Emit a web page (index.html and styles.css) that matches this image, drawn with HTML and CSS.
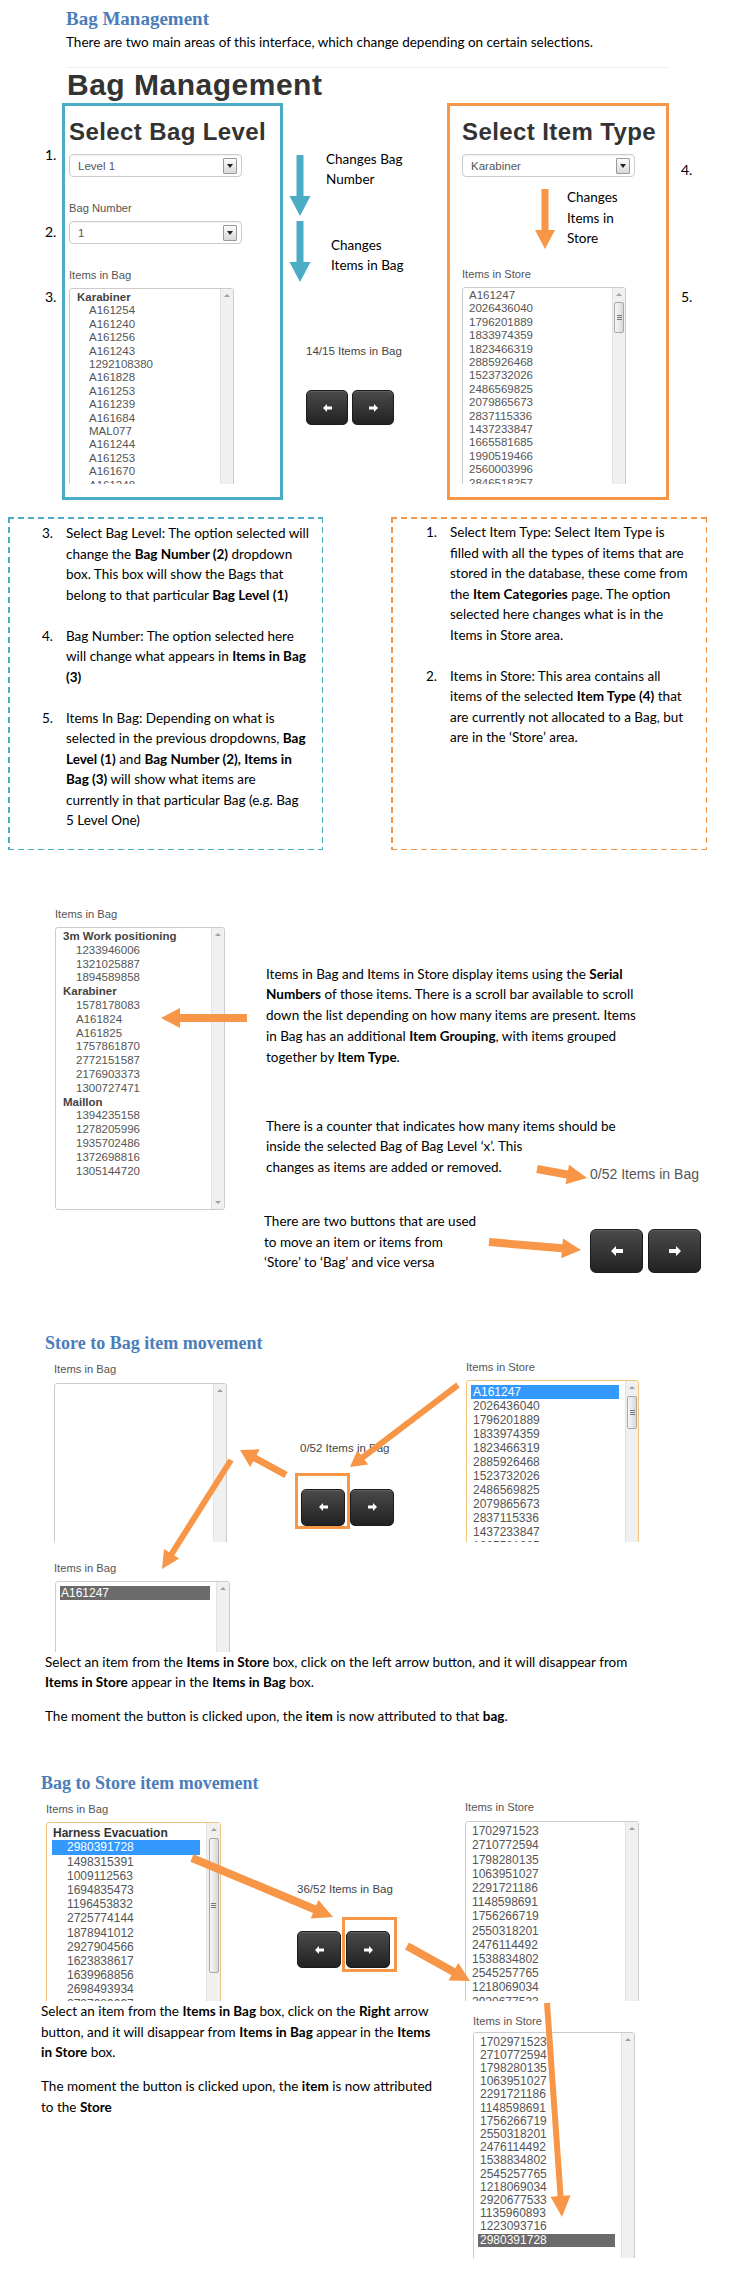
FILE: index.html
```html
<!DOCTYPE html>
<html>
<head>
<meta charset="utf-8">
<link rel="stylesheet" href="styles.css">
</head>
<body>
<div class="page">

<section class="intro">
  <h1 class="doc-h h-top">Bag Management</h1>
  <p class="lead">There are two main areas of this interface, which change depending on certain selections.</p>
  <hr class="rule">
  <h2 class="app-title">Bag Management</h2>
  <div class="app-row">
    <div class="nums nums-left"><span class="n1">1.</span><span class="n2">2.</span><span class="n3">3.</span></div>
    <div class="panel panel-blue">
      <h3 class="panel-title">Select Bag Level</h3>
      <div class="select"><span>Level 1</span><i class="caret-box"></i></div>
      <div class="lbl lbl-a">Bag Number</div>
      <div class="select sel-2"><span>1</span><i class="caret-box"></i></div>
      <div class="lbl lbl-a">Items in Bag</div>
      <div class="clip clip-a">
        <div class="listbox lb-a-bag">
          <div class="opts">
            <div class="grp">Karabiner</div>
            <div class="opt">A161254</div><div class="opt">A161240</div><div class="opt">A161256</div><div class="opt">A161243</div>
            <div class="opt">1292108380</div><div class="opt">A161828</div><div class="opt">A161253</div><div class="opt">A161239</div>
            <div class="opt">A161684</div><div class="opt">MAL077</div><div class="opt">A161244</div><div class="opt">A161253</div>
            <div class="opt">A161670</div><div class="opt">A161248</div><div class="opt">A161249</div>
          </div>
          <div class="sb"><i class="up"></i></div>
        </div>
      </div>
    </div>
    <div class="mid">
      <div class="changes c1">Changes Bag<br>Number</div>
      <div class="changes c2">Changes<br>Items in Bag</div>
      <div class="counter cnt-a">14/15 Items in Bag</div>
      <div class="btns btns-a">
        <div class="btn"><svg width="9" height="8" viewBox="0 0 9 8"><polygon points="0,4 4,0 4,2.5 9,2.5 9,5.5 4,5.5 4,8" fill="#fff"/></svg></div>
        <div class="btn"><svg width="9" height="8" viewBox="0 0 9 8"><polygon points="9,4 5,0 5,2.5 0,2.5 0,5.5 5,5.5 5,8" fill="#fff"/></svg></div>
      </div>
    </div>
    <div class="panel panel-orange">
      <h3 class="panel-title">Select Item Type</h3>
      <div class="select"><span>Karabiner</span><i class="caret-box"></i></div>
      <div class="changes c3">Changes<br>Items in<br>Store</div>
      <div class="lbl lbl-store">Items in Store</div>
      <div class="clip clip-a2">
        <div class="listbox lb-a-store">
          <div class="opts">
            <div class="opt">A161247</div><div class="opt">2026436040</div><div class="opt">1796201889</div><div class="opt">1833974359</div>
            <div class="opt">1823466319</div><div class="opt">2885926468</div><div class="opt">1523732026</div><div class="opt">2486569825</div>
            <div class="opt">2079865673</div><div class="opt">2837115336</div><div class="opt">1437233847</div><div class="opt">1665581685</div>
            <div class="opt">1990519466</div><div class="opt">2560003996</div><div class="opt">2846518257</div><div class="opt">1211840563</div>
          </div>
          <div class="sb"><i class="up"></i><div class="thumb th-a"></div></div>
        </div>
      </div>
    </div>
    <div class="nums nums-right"><span class="n4">4.</span><span class="n5">5.</span></div>
  </div>
</section>

<section class="notes">
  <div class="note note-blue">
    <div class="item"><span class="num">3.</span><p>Select Bag Level: The option selected will<br>change the <b>Bag Number (2)</b> dropdown<br>box. This box will show the Bags that<br>belong to that particular <b>Bag Level (1)</b></p></div>
    <div class="item"><span class="num">4.</span><p>Bag Number: The option selected here<br>will change what appears in <b>Items in Bag</b><br><b>(3)</b></p></div>
    <div class="item"><span class="num">5.</span><p>Items In Bag: Depending on what is<br>selected in the previous dropdowns, <b>Bag</b><br><b>Level (1)</b> and <b>Bag Number (2), Items in</b><br><b>Bag (3)</b> will show what items are<br>currently in that particular Bag (e.g. Bag<br>5 Level One)</p></div>
  </div>
  <div class="note note-orange">
    <div class="item"><span class="num">1.</span><p>Select Item Type: Select Item Type is<br>filled with all the types of items that are<br>stored in the database, these come from<br>the <b>Item Categories</b> page. The option<br>selected here changes what is in the<br>Items in Store area.</p></div>
    <div class="item"><span class="num">2.</span><p>Items in Store: This area contains all<br>items of the selected <b>Item Type (4)</b> that<br>are currently not allocated to a Bag, but<br>are in the ‘Store’ area.</p></div>
  </div>
</section>

<section class="explain">
  <div class="col-list">
    <div class="lbl">Items in Bag</div>
    <div class="listbox lb-c">
      <div class="opts">
        <div class="grp">3m Work positioning</div>
        <div class="opt">1233946006</div><div class="opt">1321025887</div><div class="opt">1894589858</div>
        <div class="grp">Karabiner</div>
        <div class="opt">1578178083</div><div class="opt">A161824</div><div class="opt">A161825</div><div class="opt">1757861870</div>
        <div class="opt">2772151587</div><div class="opt">2176903373</div><div class="opt">1300727471</div>
        <div class="grp">Maillon</div>
        <div class="opt">1394235158</div><div class="opt">1278205996</div><div class="opt">1935702486</div><div class="opt">1372698816</div><div class="opt">1305144720</div>
      </div>
      <div class="sb"><i class="up"></i><i class="down"></i></div>
    </div>
  </div>
  <div class="col-text">
    <p class="para p1">Items in Bag and Items in Store display items using the <b>Serial</b><br><b>Numbers</b> of those items. There is a scroll bar available to scroll<br>down the list depending on how many items are present. Items<br>in Bag has an additional <b>Item Grouping</b>, with items grouped<br>together by <b>Item Type</b>.</p>
    <div class="row2">
      <p class="para p2">There is a counter that indicates how many items should be<br>inside the selected Bag of Bag Level ‘x’. This<br>changes as items are added or removed.</p>
      <div class="counter cnt-big">0/52 Items in Bag</div>
    </div>
    <div class="row3">
      <p class="para p3">There are two buttons that are used<br>to move an item or items from<br>‘Store’ to ‘Bag’ and vice versa</p>
      <div class="btns btns-big">
        <div class="btn"><svg width="12" height="10" viewBox="0 0 12 10"><polygon points="0,5 5,0 5,3 12,3 12,7 5,7 5,10" fill="#fff"/></svg></div>
        <div class="btn"><svg width="12" height="10" viewBox="0 0 12 10"><polygon points="12,5 7,0 7,3 0,3 0,7 7,7 7,10" fill="#fff"/></svg></div>
      </div>
    </div>
  </div>
</section>

<section class="move move-d">
  <h2 class="doc-h h-d">Store to Bag item movement</h2>
  <div class="move-row">
    <div class="mcol mcol-dl">
      <div class="lbl">Items in Bag</div>
      <div class="clip clip-dl">
        <div class="listbox lb-d-left">
          <div class="opts"></div>
          <div class="sb"><i class="up"></i></div>
        </div>
      </div>
    </div>
    <div class="mmid mmid-d">
      <div class="counter cnt-d">0/52 Items in Bag</div>
      <div class="btns btns-m">
        <div class="btn"><svg width="9" height="8" viewBox="0 0 9 8"><polygon points="0,4 4,0 4,2.5 9,2.5 9,5.5 4,5.5 4,8" fill="#fff"/></svg></div>
        <div class="btn"><svg width="9" height="8" viewBox="0 0 9 8"><polygon points="9,4 5,0 5,2.5 0,2.5 0,5.5 5,5.5 5,8" fill="#fff"/></svg></div>
      </div>
    </div>
    <div class="mcol mcol-dr">
      <div class="lbl">Items in Store</div>
      <div class="clip clip-dr">
        <div class="listbox lb-d-store focus">
          <div class="opts">
            <div class="opt sel">A161247</div><div class="opt">2026436040</div><div class="opt">1796201889</div><div class="opt">1833974359</div>
            <div class="opt">1823466319</div><div class="opt">2885926468</div><div class="opt">1523732026</div><div class="opt">2486569825</div>
            <div class="opt">2079865673</div><div class="opt">2837115336</div><div class="opt">1437233847</div><div class="opt">1665581685</div>
          </div>
          <div class="sb"><i class="up"></i><div class="thumb th-d"></div></div>
        </div>
      </div>
    </div>
  </div>
  <div class="after-d">
    <div class="lbl">Items in Bag</div>
    <div class="clip clip-db">
      <div class="listbox lb-d-bot">
        <div class="opts"><div class="opt sel grey">A161247</div></div>
        <div class="sb"><i class="up"></i></div>
      </div>
    </div>
  </div>
  <p class="para pd1">Select an item from the <b>Items in Store</b> box, click on the left arrow button, and it will disappear from<br><b>Items in Store</b> appear in the <b>Items in Bag</b> box.</p>
  <p class="para pd2">The moment the button is clicked upon, the <b>item</b> is now attributed to that <b>bag</b>.</p>
</section>

<section class="move move-e">
  <h2 class="doc-h h-e">Bag to Store item movement</h2>
  <div class="move-row">
    <div class="mcol mcol-el">
      <div class="lbl">Items in Bag</div>
      <div class="clip clip-el">
        <div class="listbox lb-e-bag focus">
          <div class="opts">
            <div class="grp">Harness Evacuation</div>
            <div class="opt sel">2980391728</div><div class="opt">1498315391</div><div class="opt">1009112563</div><div class="opt">1694835473</div>
            <div class="opt">1196453832</div><div class="opt">2725774144</div><div class="opt">1878941012</div><div class="opt">2927904566</div>
            <div class="opt">1623838617</div><div class="opt">1639968856</div><div class="opt">2698493934</div><div class="opt">2727089097</div>
          </div>
          <div class="sb"><i class="up"></i><div class="thumb th-e"></div></div>
        </div>
      </div>
    </div>
    <div class="mmid mmid-e">
      <div class="counter cnt-e">36/52 Items in Bag</div>
      <div class="btns btns-m">
        <div class="btn"><svg width="9" height="8" viewBox="0 0 9 8"><polygon points="0,4 4,0 4,2.5 9,2.5 9,5.5 4,5.5 4,8" fill="#fff"/></svg></div>
        <div class="btn"><svg width="9" height="8" viewBox="0 0 9 8"><polygon points="9,4 5,0 5,2.5 0,2.5 0,5.5 5,5.5 5,8" fill="#fff"/></svg></div>
      </div>
    </div>
    <div class="mcol mcol-er">
      <div class="lbl">Items in Store</div>
      <div class="clip clip-er">
        <div class="listbox lb-e-store">
          <div class="opts">
            <div class="opt">1702971523</div><div class="opt">2710772594</div><div class="opt">1798280135</div><div class="opt">1063951027</div>
            <div class="opt">2291721186</div><div class="opt">1148598691</div><div class="opt">1756266719</div><div class="opt">2550318201</div>
            <div class="opt">2476114492</div><div class="opt">1538834802</div><div class="opt">2545257765</div><div class="opt">1218069034</div>
            <div class="opt">2920677533</div>
          </div>
          <div class="sb"><i class="up"></i></div>
        </div>
      </div>
    </div>
  </div>
  <div class="after-e">
    <div class="etext">
      <p class="para pe1">Select an item from the <b>Items in Bag</b> box, click on the <b>Right</b> arrow<br>button, and it will disappear from <b>Items in Bag</b> appear in the <b>Items</b><br><b>in Store</b> box.</p>
      <p class="para pe2">The moment the button is clicked upon, the <b>item</b> is now attributed<br>to the <b>Store</b></p>
    </div>
    <div class="ecol">
      <div class="lbl">Items in Store</div>
      <div class="clip clip-e2">
        <div class="listbox lb-e-store2">
          <div class="opts">
            <div class="opt">1702971523</div><div class="opt">2710772594</div><div class="opt">1798280135</div><div class="opt">1063951027</div>
            <div class="opt">2291721186</div><div class="opt">1148598691</div><div class="opt">1756266719</div><div class="opt">2550318201</div>
            <div class="opt">2476114492</div><div class="opt">1538834802</div><div class="opt">2545257765</div><div class="opt">1218069034</div>
            <div class="opt">2920677533</div><div class="opt">1135960893</div><div class="opt">1223093716</div><div class="opt sel grey">2980391728</div>
          </div>
          <div class="sb"><i class="up"></i></div>
        </div>
      </div>
    </div>
  </div>
</section>

<svg class="overlay" width="736" height="2296" viewBox="0 0 736 2296">
  <g fill="#4bacc6">
    <polygon points="296.5,155 296.5,196 289.5,196 300,216 310.5,196 303.5,196 303.5,155"/>
    <polygon points="296.5,221 296.5,262 289.5,262 300,282 310.5,262 303.5,262 303.5,221"/>
  </g>
  <g fill="#f79646">
    <polygon points="541.5,189 541.5,230 535,230 545,249 555,230 548.5,230 548.5,189"/>
    <polygon points="247,1014 180,1014 180,1008 161,1018 180,1028 180,1022 247,1022"/>
    <polygon points="537.7,1165.1 568.0,1170.6 569.1,1164.7 587,1178 565.5,1184.3 566.6,1178.4 536.3,1172.9"/>
    <polygon points="489.35,1238.02 562.45,1244.37 562.97,1238.39 581,1250 561.23,1258.31 561.75,1252.33 488.65,1245.98"/>
    <polygon points="456.19,1382.61 360.93,1454.93 357.3,1450.15 350,1467 368.18,1464.49 364.55,1459.71 459.81,1387.39"/>
    <polygon points="287.67,1471.92 256.61,1455.04 259.72,1449.33 240,1450 250.16,1466.91 253.27,1461.2 284.33,1478.08"/>
    <polygon points="228.46,1458.4 169.1,1552.19 164.03,1548.98 162,1569 179.23,1558.6 174.17,1555.39 233.54,1461.6"/>
    <polygon points="193.54,1854.31 316.09,1905.59 318.41,1900.06 333,1917 310.69,1918.51 313.01,1912.97 190.46,1861.69"/>
    <polygon points="408.94,1942.5 455.33,1968.27 458.25,1963.03 470,1981 448.53,1980.51 451.45,1975.27 405.06,1949.5"/>
    <polygon points="549.99,2002.79 563.52,2195.84 570.51,2195.35 562,2217 550.55,2196.75 557.54,2196.26 544.01,2003.21"/>
  </g>
  <g fill="none" stroke="#f79646" stroke-width="3">
    <rect x="296.5" y="1474.5" width="52" height="53"/>
    <rect x="343.5" y="1918.5" width="52" height="52"/>
  </g>
</svg>

</div>
</body>
</html>
```

FILE: styles.css
```css
* { box-sizing: border-box; }
html, body { margin: 0; padding: 0; background: #fff; }
.page {
  position: relative;
  width: 736px;
  height: 2296px;
  overflow: hidden;
  font-family: Lato, "Open Sans", sans-serif;
  color: #000;
}
.overlay { position: absolute; left: 0; top: 0; pointer-events: none; }
p { margin: 0; }
b { font-weight: bold; }

/* document headings */
.doc-h {
  margin: 0;
  font-family: "Liberation Serif", "Times New Roman", serif;
  font-weight: bold;
  color: #4a7dba;
  font-size: 18px;
  line-height: 22px;
}
.h-top { padding-top: 8px; margin-left: 66px; font-size: 19px; }
.lead { margin: 3px 0 0 66px; font-size: 13.5px; line-height: 18px; }
.rule { margin: 16px 0 0 67px; width: 601px; height: 0; border: 0; border-top: 1px solid #efefef; }
.app-title {
  margin: 0 0 0 67px;
  font: bold 30px/34px "Liberation Sans", Arial, sans-serif;
  letter-spacing: 0.5px;
  color: #333;
}

/* app mock */
.app-row { display: flex; margin-top: 1px; height: 397px; }
.nums { font-size: 14px; line-height: 18px; }
.nums span { display: block; }
.nums-left { width: 62px; padding-left: 45px; }
.n1 { margin-top: 43px; }
.n2 { margin-top: 59px; }
.n3 { margin-top: 47px; }
.nums-right { padding-left: 12px; }
.n4 { margin-top: 58px; }
.n5 { margin-top: 109px; }

.panel { height: 397px; }
.panel-blue { width: 221px; border: 3px solid #4bacc6; padding: 12px 0 0 4px; }
.panel-orange { width: 222px; border: 3px solid #f79646; padding: 12px 0 0 12px; }
.panel-title {
  margin: 0;
  font: bold 24px/28px "Liberation Sans", Arial, sans-serif;
  letter-spacing: 0.4px;
  color: #333;
}
.select {
  display: flex;
  align-items: center;
  justify-content: space-between;
  margin-top: 8px;
  width: 173px;
  height: 23px;
  border: 1px solid #ccc;
  border-radius: 4px;
  padding: 0 4px 0 8px;
  font: 11.5px "Liberation Sans", Arial, sans-serif;
  color: #555;
  box-shadow: inset 0 1px 1px rgba(0,0,0,0.06);
}
.sel-2 { margin-top: 5px; }
.caret-box {
  width: 14px;
  height: 16px;
  border: 1px solid #9a9a9a;
  border-radius: 1px;
  background: linear-gradient(#fbfbfb, #d9d9d9);
  display: flex;
  align-items: center;
  justify-content: center;
}
.caret-box::after {
  content: "";
  border-left: 3px solid transparent;
  border-right: 3px solid transparent;
  border-top: 4px solid #222;
}
.lbl {
  font: 11.2px/15px "Liberation Sans", Arial, sans-serif;
  color: #555;
}
.lbl-a { margin-top: 24px; }
.lbl-store { margin-top: 18px; }
.clip { overflow: hidden; }
.clip-a { margin-top: 5px; height: 196px; }
.clip-a2 { margin-top: 5.5px; height: 197px; }

.mid { width: 164px; }
.changes { font-size: 13.5px; line-height: 20px; }
.c1 { margin: 46px 0 0 43px; }
.c2 { margin: 46px 0 0 48px; }
.c3 { margin: 10px 0 0 105px; line-height: 20.5px; }
.counter { font: 11.5px/14px "Liberation Sans", Arial, sans-serif; color: #444; white-space: nowrap; }
.cnt-a { margin: 69px 0 0 23px; }
.btns { display: flex; }
.btns-a { margin: 32px 0 0 23px; gap: 4px; }
.btn {
  display: flex;
  align-items: center;
  justify-content: center;
  width: 42px;
  height: 35px;
  border-radius: 5px;
  background: linear-gradient(#4a4a4a, #222);
  border: 1px solid #1c1c1c;
  box-shadow: inset 0 1px 0 rgba(255,255,255,0.12);
}

/* listboxes */
.listbox {
  display: flex;
  border: 1px solid #ccc;
  border-radius: 3px;
  background: #fff;
  font: 11.5px "Liberation Sans", Arial, sans-serif;
  color: #555;
  overflow: hidden;
}
.listbox.focus { border-color: #f1c47f; }
.opts { flex: 1; min-width: 0; }
.opt, .grp { white-space: nowrap; }
.grp { font-weight: bold; color: #444; }
.opt.sel { background: #3399ff; color: #fff; }
.opt.sel.grey { background: #6b6b6b; color: #fff; }
.sb {
  flex: none;
  width: 13px;
  background: #f0f0f0;
  border-left: 1px solid #e2e2e2;
  display: flex;
  flex-direction: column;
  align-items: center;
}
.sb .up {
  margin-top: 5px;
  width: 0; height: 0;
  border-left: 3px solid transparent;
  border-right: 3px solid transparent;
  border-bottom: 3px solid #a0a0a0;
}
.sb .down {
  margin-top: auto;
  margin-bottom: 5px;
  width: 0; height: 0;
  border-left: 3px solid transparent;
  border-right: 3px solid transparent;
  border-top: 3px solid #a0a0a0;
}
.thumb {
  width: 10px;
  border: 1px solid #a8a8a8;
  border-radius: 2px;
  background: linear-gradient(90deg, #f7f7f7, #d8d8d8);
  display: flex;
  align-items: center;
  justify-content: center;
}
.thumb::after {
  content: "";
  width: 5px;
  height: 5px;
  background: repeating-linear-gradient(#777 0 1px, transparent 1px 2px);
}

.lb-a-bag { width: 165px; height: 260px; }
.lb-a-bag .opts { padding-top: 2px; line-height: 13.4px; }
.lb-a-bag .grp { padding-left: 7px; }
.lb-a-bag .opt { padding-left: 19px; }
.lb-a-store { width: 164px; height: 260px; }
.lb-a-store .opts { padding-top: 1px; line-height: 13.4px; }
.lb-a-store .opt { padding-left: 6px; }
.th-a { margin-top: 6px; height: 31px; }

/* explain section */
.notes { display: flex; margin-top: 17px; height: 333px; }
.note {
  height: 333px;
  font-size: 13.5px;
  line-height: 20.5px;
}
.note-blue {
  width: 315px;
  margin-left: 8px;
  padding: 6px 0 0 34px;
  background:
    linear-gradient(90deg, #4bacc6 60%, transparent 60%) top left / 10px 1.5px repeat-x,
    linear-gradient(90deg, #4bacc6 60%, transparent 60%) bottom left / 10px 1.5px repeat-x,
    linear-gradient(#4bacc6 60%, transparent 60%) top left / 1.5px 10px repeat-y,
    linear-gradient(#4bacc6 60%, transparent 60%) top right / 1.5px 10px repeat-y;
}
.note-orange {
  width: 316px;
  margin-left: 68px;
  padding: 5px 0 0 35px;
  background:
    linear-gradient(90deg, #f79646 60%, transparent 60%) top left / 10px 1.5px repeat-x,
    linear-gradient(90deg, #f79646 60%, transparent 60%) bottom left / 10px 1.5px repeat-x,
    linear-gradient(#f79646 60%, transparent 60%) top left / 1.5px 10px repeat-y,
    linear-gradient(#f79646 60%, transparent 60%) top right / 1.5px 10px repeat-y;
}
.item { display: flex; margin-bottom: 20.5px; }
.item .num { flex: none; width: 24px; }
.item p { white-space: nowrap; }

.explain { display: flex; }
.col-list { margin-left: 55px; padding-top: 56.5px; }
.col-list .listbox { margin-top: 5.5px; }
.lb-c { width: 170px; height: 283px; }
.lb-c .opts { padding-top: 2px; line-height: 13.8px; }
.lb-c .grp { padding-left: 7px; }
.lb-c .opt { padding-left: 20px; }
.col-text { margin-left: 41px; padding-top: 113.6px; }
.para { font-size: 13.5px; line-height: 20.5px; white-space: nowrap; }
.p1 { line-height: 20.75px; }
.row2 { display: flex; margin-top: 48.2px; }
.p2 { width: 324px; }
.cnt-big { margin-top: 50.4px; font-size: 14px; line-height: 16px; color: #555; }
.row3 { display: flex; margin-top: 29.5px; margin-left: -2px; }
.p3 { width: 326px; }
.btns-big { margin-top: 17.4px; gap: 5px; }
.btns-big .btn { width: 53px; height: 44px; border-radius: 6px; }

/* movement sections */
.h-d { margin: 59px 0 0 45px; }
.move-row { display: flex; }
.mcol-dl { margin-left: 54px; width: 173px; padding-top: 8.5px; }
.mcol-dl .clip { margin-top: 5.5px; }
.clip-dl { height: 159px; }
.lb-d-left { width: 173px; height: 200px; }
.mmid-d { margin-left: 73px; width: 166px; }
.cnt-d { margin-top: 87px; }
.btns-m { gap: 5px; }
.btns-m .btn { width: 44px; height: 37px; }
.mmid-d .btns { margin: 34px 0 0 1px; }
.mcol-dr { width: 173px; padding-top: 6.5px; }
.mcol-dr .clip { margin-top: 4.5px; }
.clip-dr { height: 162px; }
.lb-d-store { width: 173px; height: 220px; font-size: 12px; }
.lb-d-store .opts { padding-top: 4px; line-height: 14px; }
.lb-d-store .opt { padding-left: 6px; }
.lb-d-store .opt.sel { margin: 0 6px 0 4px; padding-left: 2px; }
.th-d { margin-top: 7px; height: 33px; }

.after-d { margin-left: 54px; padding-top: 19.5px; }
.clip-db { margin: 4.5px 0 0 1px; height: 71px; }
.lb-d-bot { width: 175px; height: 120px; font-size: 12px; }
.lb-d-bot .opts { padding-top: 4px; line-height: 14px; }
.lb-d-bot .opt.sel { margin: 0 6px 0 4px; padding-left: 1px; }
.pd1 { margin-left: 45px; }
.pd2 { margin: 13px 0 0 45px; }

.h-e { margin: 45.75px 0 0 41px; }
.mcol-el { margin-left: 46px; width: 175px; padding-top: 7.5px; }
.mcol-el .clip { margin-top: 5.5px; }
.clip-el { height: 179px; }
.lb-e-bag { width: 175px; height: 230px; font-size: 12px; }
.lb-e-bag .sb { width: 14px; }
.lb-e-bag .opts { padding-top: 3px; line-height: 14.2px; }
.lb-e-bag .grp { padding-left: 6px; color: #333; }
.lb-e-bag .opt { padding-left: 20px; }
.lb-e-bag .opt.sel { margin: 0 6px 0 5px; padding-left: 15px; }
.th-e { margin-top: 7px; height: 135px; }
.mmid-e { margin-left: 76px; width: 168px; }
.cnt-e { margin-top: 88px; }
.mmid-e .btns { margin-top: 35px; }
.mcol-er { width: 174px; padding-top: 5.5px; }
.mcol-er .clip { margin-top: 6.5px; }
.clip-er { height: 180px; }
.lb-e-store { width: 174px; height: 230px; font-size: 12px; }
.lb-e-store .opts { padding-top: 2px; line-height: 14.2px; }
.lb-e-store .opt { padding-left: 6px; }

.after-e { display: flex; }
.etext { margin-left: 41px; width: 432px; }
.pe2 { margin-top: 13.5px; }
.ecol { padding-top: 12.5px; }
.clip-e2 { margin-top: 3.5px; height: 226px; }
.lb-e-store2 { width: 162px; height: 260px; font-size: 12px; }
.lb-e-store2 .opts { padding-top: 2.4px; line-height: 13.2px; }
.lb-e-store2 .opt { padding-left: 6px; }
.lb-e-store2 .opt.sel { margin: 0 6px 0 4px; padding-left: 2px; }
```
